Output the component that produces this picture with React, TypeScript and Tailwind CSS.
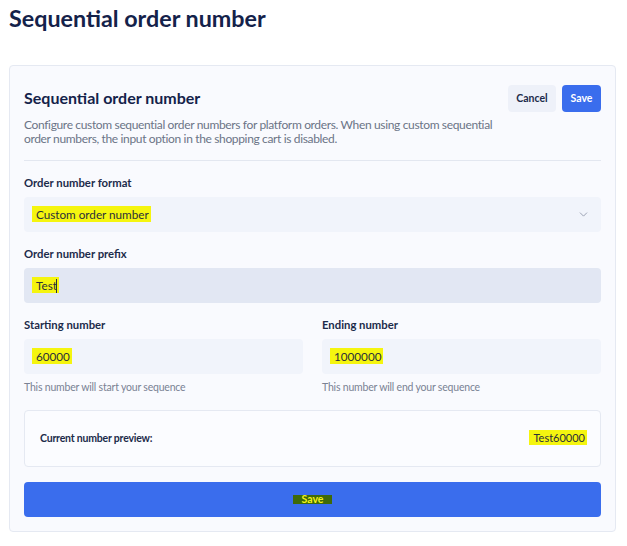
import { ChevronDown } from 'lucide-react';

const font = { fontFamily: 'Lato, "Noto Sans", sans-serif' };

function Label({ children }: { children: React.ReactNode }) {
  return <div className="mb-[7px] text-[11.3px] font-bold leading-[14px] text-[#1c2b4a]">{children}</div>;
}

function Mark({ children }: { children: React.ReactNode }) {
  return <span className="bg-[#f5f50f] py-[1px] pl-[4px] pr-[2px] text-[#2b2f3a]">{children}</span>;
}

export default function App() {
  return (
    <div className="min-h-screen bg-white pl-[9px] pr-[11px] pt-[3px]" style={font}>
      <h1 className="text-[23.3px] font-bold leading-[30px] text-[#14224a]">Sequential order number</h1>

      <div className="mt-[32px] rounded-[4px] border border-[#e5e9f2] bg-[#f9fafe] px-[14px] pb-[14px] pt-[19px]">
        <div className="flex items-start justify-between gap-2">
          <div className="min-w-0 flex-1">
            <h2 className="mt-[3px] text-[16px] font-bold leading-[20px] text-[#14224a]">Sequential order number</h2>
            <p className="mt-[10px] whitespace-nowrap text-[12px] leading-[14px] tracking-[-0.35px] text-[#6b7486]">
              Configure custom sequential order numbers for platform orders. When using custom sequential
              <br />
              order numbers, the input option in the shopping cart is disabled.
            </p>
          </div>
          <div className="flex shrink-0 gap-[6px]">
            <button className="h-[27px] w-[48px] rounded-[4px] bg-[#eef1f9] text-[10.5px] font-bold text-[#1c2b4a]">Cancel</button>
            <button className="h-[27px] w-[39px] rounded-[4px] bg-[#3a6ded] text-[10.5px] font-bold text-white">Save</button>
          </div>
        </div>

        <div className="mt-[14px] border-t border-[#e3e7f0]" />

        <div className="mt-[15px]">
          <Label>Order number format</Label>
          <div className="flex h-[35px] items-center justify-between rounded-[4px] bg-[#f1f4fb] pl-[8px] pr-[11px]">
            <span className="text-[11.7px] text-[#2b2f3a]"><Mark>Custom order number</Mark></span>
            <ChevronDown className="h-[13px] w-[13px] text-[#8e96a8]" strokeWidth={1.6} />
          </div>
        </div>

        <div className="mt-[15px]">
          <Label>Order number prefix</Label>
          <div className="flex h-[35px] items-center rounded-[4px] bg-[#e2e7f3] pl-[8px]">
            <span className="text-[11.7px]"><Mark>Test</Mark></span>
            <span className="-ml-[3px] h-[14px] w-px bg-[#2b2f3a]" />
          </div>
        </div>

        <div className="mt-[15px] grid grid-cols-2 gap-[19px]">
          <div>
            <Label>Starting number</Label>
            <div className="flex h-[35px] items-center rounded-[4px] bg-[#f1f4fb] pl-[8px]">
              <span className="text-[11.7px]"><Mark>60000</Mark></span>
            </div>
            <p className="mt-[6px] text-[10.5px] leading-[14px] tracking-[-0.2px] text-[#7a8294]">This number will start your sequence</p>
          </div>
          <div>
            <Label>Ending number</Label>
            <div className="flex h-[35px] items-center rounded-[4px] bg-[#f1f4fb] pl-[8px]">
              <span className="text-[11.7px]"><Mark>1000000</Mark></span>
            </div>
            <p className="mt-[6px] text-[10.5px] leading-[14px] tracking-[-0.2px] text-[#7a8294]">This number will end your sequence</p>
          </div>
        </div>

        <div className="mt-[16px] flex h-[57px] items-center justify-between rounded-[4px] border border-[#e5e9f2] bg-[#fbfcff] pl-[15px] pr-[13px]">
          <span className="text-[10.5px] font-bold tracking-[-0.2px] text-[#1c2b4a]">Current number preview:</span>
          <span className="text-[11px]"><Mark>Test60000</Mark></span>
        </div>

        <button className="mt-[15px] flex h-[35px] w-full items-center justify-center rounded-[4px] bg-[#3a6ded]">
          <span className="inline-block h-[9px] bg-[#3f6a08] px-[9px] text-[10.5px] font-bold leading-[9px] text-[#f3f31a]">Save</span>
        </button>
      </div>
    </div>
  );
}
